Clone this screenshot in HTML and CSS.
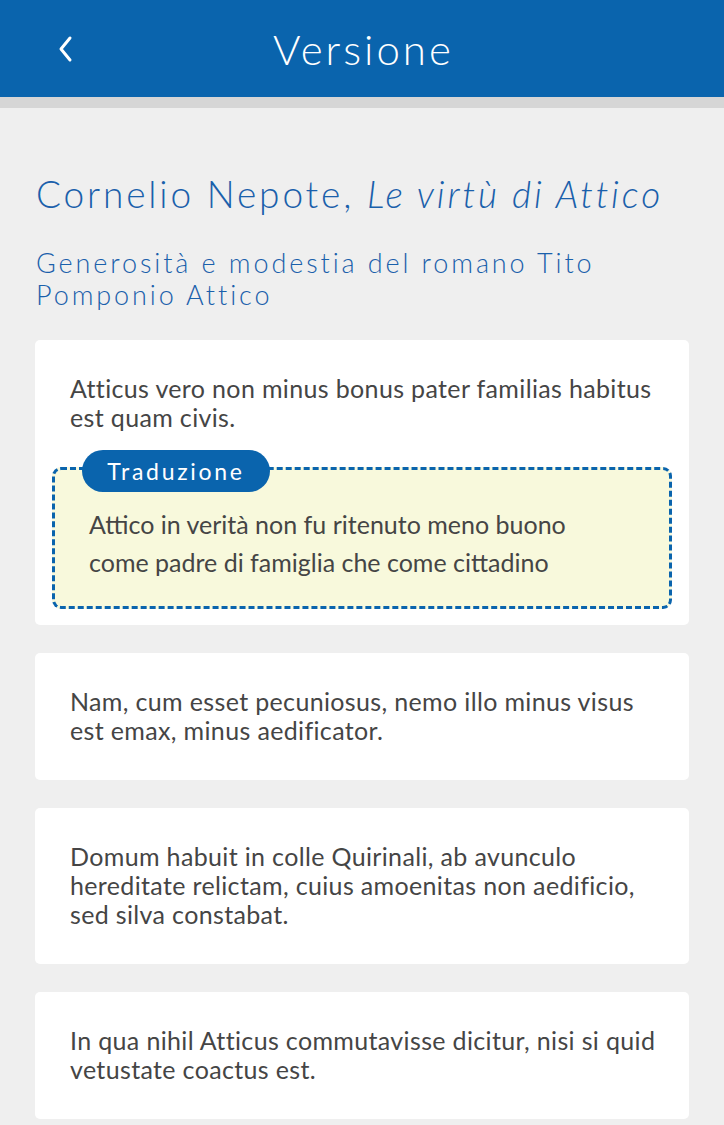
FILE: index.html
```html
<!DOCTYPE html>
<html lang="it">
<head>
<meta charset="utf-8">
<title>Versione</title>
<link rel="stylesheet" href="styles.css">
</head>
<body>
<header class="topbar">
  <a class="back" href="#" aria-label="Indietro">
    <svg width="16" height="28" viewBox="0 0 16 28"><polyline points="12,3 3,14 12,25" fill="none" stroke="#fff" stroke-width="3" stroke-linecap="round" stroke-linejoin="round"/></svg>
  </a>
  <h1 class="topbar-title">Versione</h1>
</header>
<div class="topbar-shadow"></div>
<main class="content">
  <h2 class="work-title">Cornelio Nepote, <em>Le virtù di Attico</em></h2>
  <h3 class="work-subtitle">Generosità e modestia del romano Tito Pomponio Attico</h3>

  <section class="card card-first">
    <p class="latin">Atticus vero non minus bonus pater familias habitus est quam civis.</p>
    <div class="translation">
      <span class="badge">Traduzione</span>
      <p class="translation-text">Attico in verità non fu ritenuto meno buono come padre di famiglia che come cittadino</p>
    </div>
  </section>

  <section class="card">
    <p class="latin">Nam, cum esset pecuniosus, nemo illo minus visus est emax, minus aedificator.</p>
  </section>

  <section class="card">
    <p class="latin">Domum habuit in colle Quirinali, ab avunculo hereditate relictam, cuius amoenitas non aedificio, sed silva constabat.</p>
  </section>

  <section class="card">
    <p class="latin">In qua nihil Atticus commutavisse dicitur, nisi si quid vetustate coactus est.</p>
  </section>
</main>
</body>
</html>
```
FILE: styles.css
```css
* { box-sizing: border-box; }
html, body { margin: 0; padding: 0; }
body {
  background: #efefef;
  font-family: Lato, "Open Sans", sans-serif;
  color: #454545;
}
.topbar {
  height: 97px;
  background: #0a64ad;
  display: flex;
  align-items: center;
  justify-content: center;
  position: relative;
}
.back {
  position: absolute;
  left: 58px;
  top: 35px;
  display: block;
  width: 16px;
  height: 28px;
}
.back svg { display: block; }
.topbar-title {
  margin: 0;
  color: #fff;
  font-weight: 300;
  font-size: 42px;
  letter-spacing: 3px;
  line-height: 1;
  padding-left: 3px;
}
.topbar-shadow {
  height: 11px;
  background: #d6d6d6;
}
.content {
  padding: 66px 35px 0 35px;
}
.work-title {
  margin: 0 0 0 1px;
  color: #1a60ab;
  font-weight: 300;
  font-size: 37px;
  letter-spacing: 2.85px;
  line-height: 40px;
  white-space: nowrap;
}
.work-title em { font-style: italic; }
.work-subtitle {
  margin: 33px 0 29px 1px;
  color: #1a60ab;
  font-weight: 300;
  font-size: 27px;
  letter-spacing: 2.9px;
  line-height: 32px;
  max-width: 620px;
}
.card {
  background: #fff;
  border-radius: 5px;
  padding: 17px 17px 17px;
  margin-bottom: 28px;
}
.card-first { padding-bottom: 16px; }
.latin {
  margin: 0;
  padding: 17px 10px 18px 18px;
  font-size: 25px;
  letter-spacing: 0.35px;
  line-height: 29px;
}
.translation {
  position: relative;
  margin-top: 17px;
  border: 3px dashed #0a64ad;
  border-radius: 9px;
  background: #f8f9dc;
  padding: 35px 34px 25px 34px;
}
.badge {
  position: absolute;
  top: -20px;
  left: 27px;
  height: 42px;
  width: 188px;
  border-radius: 21px;
  background: #0a64ad;
  color: #fff;
  font-size: 23px;
  letter-spacing: 2.7px;
  display: flex;
  align-items: center;
  justify-content: center;
}
.translation-text {
  margin: 0;
  max-width: 495px;
  font-size: 25px;
  line-height: 38px;
}
```
